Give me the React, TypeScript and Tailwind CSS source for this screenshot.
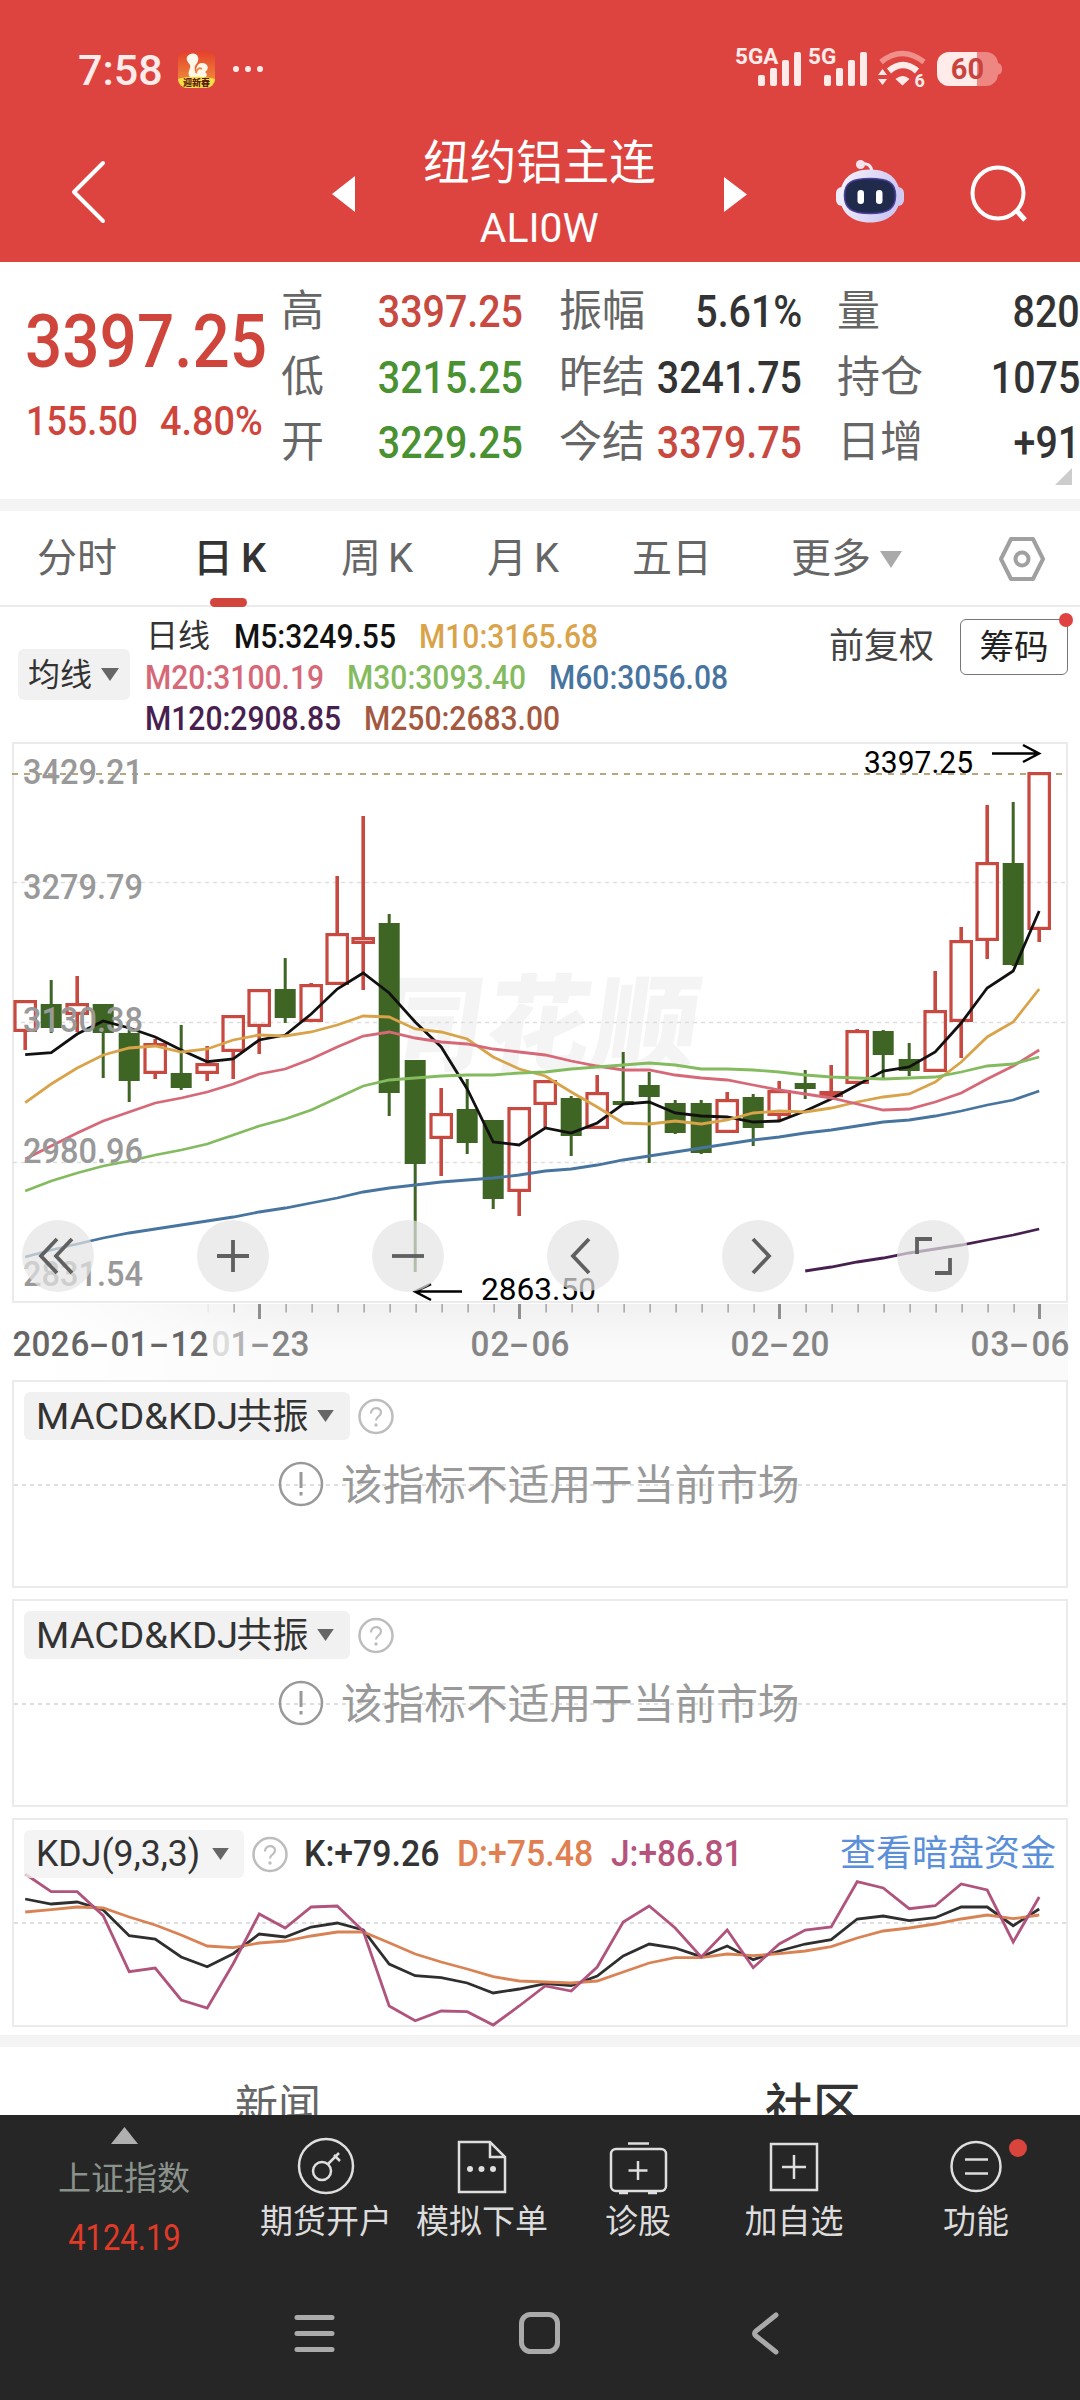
import React from "react";

type Candle = [up: 0 | 1, high: number, top: number, bottom: number, low: number];

const CANDLES: Candle[] = [
  [1, 1000, 1000, 1032, 1050], [0, 980, 1004, 1028, 1033], [1, 976, 1003, 1015, 1032], [0, 1004, 1004, 1033, 1078],
  [0, 1030, 1033, 1081, 1102], [1, 1039, 1043, 1074, 1079], [0, 1025, 1073, 1088, 1090], [1, 1046, 1063, 1074, 1081],
  [1, 1015, 1015, 1052, 1079], [1, 989, 989, 1027, 1054], [0, 958, 989, 1018, 1023], [1, 983, 984, 1022, 1022],
  [1, 876, 933, 985, 985], [1, 816, 937, 944, 990], [0, 914, 923, 1093, 1116], [0, 1060, 1060, 1164, 1272],
  [1, 1088, 1113, 1139, 1176], [0, 1079, 1109, 1143, 1154], [0, 1120, 1120, 1199, 1209], [1, 1107, 1107, 1192, 1216],
  [1, 1080, 1080, 1105, 1127], [0, 1096, 1098, 1136, 1156], [1, 1075, 1092, 1129, 1129], [0, 1052, 1101, 1105, 1105],
  [0, 1072, 1085, 1097, 1163], [0, 1100, 1103, 1133, 1134], [0, 1100, 1103, 1153, 1154], [1, 1092, 1099, 1133, 1133],
  [0, 1094, 1097, 1128, 1146], [1, 1081, 1090, 1116, 1120], [0, 1070, 1083, 1089, 1099], [1, 1065, 1091, 1097, 1097],
  [1, 1029, 1030, 1084, 1084], [0, 1030, 1031, 1055, 1078], [0, 1043, 1059, 1071, 1076], [1, 971, 1010, 1072, 1072],
  [1, 927, 940, 1022, 1058], [1, 805, 862, 941, 959], [0, 802, 863, 965, 966], [1, 772, 772, 930, 942],
];

const AVERAGES = [
  { color: "#111111", from: 0, ys: [1054.7, 1052.7, 1034, 1021, 1028, 1037, 1050, 1061.7, 1059, 1040, 1035, 1014, 989, 973, 993, 1022, 1047, 1089, 1142, 1145, 1128, 1133, 1123, 1104, 1102, 1113, 1116, 1117, 1122, 1121, 1111, 1099, 1085, 1071, 1067, 1052, 1023, 988, 971, 911] },
  { color: "#d9a34a", from: 0, ys: [1102.7, 1084, 1068, 1055, 1048, 1046, 1052, 1049, 1040, 1035, 1036, 1032, 1025, 1016, 1017, 1029, 1032, 1039, 1057, 1069, 1076, 1092, 1107, 1123, 1124, 1121, 1124, 1120, 1113, 1111, 1112, 1108, 1102, 1097, 1094, 1082, 1062, 1037, 1022, 989] },
  { color: "#d66878", from: 0, ys: [1159, 1146, 1133, 1121, 1112, 1103, 1098, 1092, 1084, 1074, 1069, 1059, 1047, 1036, 1032, 1038, 1042, 1044, 1049, 1052, 1055, 1061, 1066, 1070, 1070, 1075, 1078, 1080, 1085, 1090, 1094, 1098, 1104, 1110, 1109, 1102, 1093, 1079, 1066, 1050] },
  { color: "#83bb5e", from: 0, ys: [1191, 1181, 1173, 1166, 1161, 1155, 1150, 1144, 1135, 1126, 1119, 1110, 1098, 1086, 1080, 1078, 1076, 1075, 1075, 1073, 1072, 1069, 1067, 1065, 1063, 1065, 1069, 1069, 1070, 1072, 1075, 1077, 1078, 1079, 1078, 1077, 1072, 1066, 1064, 1057] },
  { color: "#47759f", from: 0, ys: [1257, 1250, 1244, 1238, 1233, 1229, 1225, 1221, 1217, 1212, 1208, 1203, 1198, 1192, 1188, 1185, 1182, 1180, 1178, 1175, 1171, 1169, 1165, 1160, 1156, 1152, 1148, 1144, 1140, 1137, 1133, 1130, 1126, 1122, 1120, 1116, 1111, 1105, 1100, 1091] },
  { color: "#482050", from: 30, ys: [1271, 1267, 1262, 1258, 1253, 1249, 1245, 1240, 1235, 1229] },
];

const KDJ = [
  { color: "#2f2f2f", ys: [1899, 1904, 1902, 1910, 1935.7, 1939, 1957, 1966.7, 1953.7, 1934, 1937, 1927, 1923, 1930, 1964, 1975.7, 1977.7, 1983, 1993, 1989, 1983.7, 1985.7, 1976, 1956, 1944, 1948, 1956.7, 1946, 1959.7, 1951, 1944, 1939.7, 1919, 1916, 1920.7, 1917.7, 1907, 1907, 1925.7, 1909] },
  { color: "#d98355", ys: [1912, 1909.7, 1907, 1908, 1917, 1925, 1935, 1946, 1947.7, 1943, 1941, 1936, 1932, 1932, 1942.7, 1954, 1962, 1969, 1976.7, 1981, 1982, 1983, 1981, 1972, 1963, 1957.7, 1957.7, 1954, 1955.7, 1953.7, 1951, 1946.7, 1938, 1931, 1928, 1924, 1919, 1915, 1918.7, 1915] },
  { color: "#b0547d", ys: [1874, 1891.7, 1891.7, 1915.7, 1971.7, 1968, 2000, 2008, 1963.7, 1914, 1928, 1907, 1906, 1931, 2006, 2020.7, 2011, 2011.7, 2025, 2006, 1986, 1991, 1967, 1922, 1906, 1928, 1957, 1930, 1967.7, 1944, 1930, 1927, 1881.7, 1888, 1908.7, 1905.7, 1884, 1890, 1942, 1897] },
];

const RED = "#c8493f";
const GREEN = "#3e6524";
const cx = (i: number) => 25.2 + 26 * i;
const points = (ys: number[], from = 0) => ys.map((y, i) => `${cx(i + from)},${y}`).join(" ");

function Signal({ label, w }: { label: string; w: string }) {
  return (
    <div className={`relative h-[36px] ${w}`}>
      <span className="absolute -top-[5px] left-0 text-[22.500px] leading-[22px] font-bold">{label}</span>
      <svg className="absolute right-0 bottom-0" width="44" height="36" fill="currentColor">
        <rect x="0" y="25" width="7" height="11" rx="2" />
        <rect x="12" y="18" width="7" height="18" rx="2" />
        <rect x="24" y="10" width="7" height="26" rx="2" />
        <rect x="36" y="2" width="7" height="34" rx="2" />
      </svg>
    </div>
  );
}

function StatusBar() {
  return (
    <div className="flex h-[120px] items-start text-[#ffecea]">
      <div className="flex h-[42px] w-[82px] items-center mt-[49px] ml-[78px]">
        <span className="inline-block origin-left text-[43px] leading-none font-medium">7:58</span>
      </div>
      <svg className="mt-[51px] ml-[18px]" width="37" height="37" viewBox="0 0 37 37">
        <defs>
          <linearGradient id="app" x1="0" y1="0" x2="0" y2="1">
            <stop offset="0" stopColor="#e5402c" />
            <stop offset="1" stopColor="#f09a3e" />
          </linearGradient>
          <clipPath id="appClip"><rect width="37" height="37" rx="9" /></clipPath>
        </defs>
        <g clipPath="url(#appClip)">
          <rect width="37" height="37" fill="url(#app)" />
          <path d="M9 6c2-4 9-5 11 0 1 4-1 6-3 9-1 3 0 6 2 8-2-5 0-11 5-11 6 0 8 6 3 9 3 2 2 5-1 6H13c-4-3-2-7-1-10 2-4-5-6-3-11z" fill="#fff7ea" />
          <path d="M18 22c1-4 3-6 6-4" fill="none" stroke="#ee8a45" strokeWidth="2" />
          <path d="M0 28c8-3 28-3 37 0v9H0z" fill="#f8dc45" />
        </g>
        <text x="18.5" y="34.5" textAnchor="middle" fontSize="9" fontWeight="800" fill="#5b1f10">迎新春</text>
      </svg>
      <svg className="mt-[64px] ml-[17px]" width="34" height="10" fill="currentColor">
        <circle cx="4" cy="5" r="3" /><circle cx="16" cy="5" r="3" /><circle cx="28" cy="5" r="3" />
      </svg>
      <div className="mt-[50px] mr-[82px] ml-auto flex">
        <Signal label="5GA" w="w-[67px]" />
        <div className="w-[6px]" />
        <Signal label="5G" w="w-[60px]" />
        <svg className="ml-[10px]" width="51" height="40" viewBox="0 0 51 40" fill="none">
          <path d="M3 12q21-17 43 0" stroke="#f0908b" strokeWidth="5.500" />
          <path d="M11 21q14-12 28 0" stroke="currentColor" strokeWidth="6.500" />
          <path d="M17.500 29q7.500-6 14 0l-7 6.500z" fill="currentColor" />
          <path d="M0 25l4.500-6 4.500 6zM0 29l4.500 6 4.500-6z" fill="currentColor" />
          <text x="36.500" y="37" fontSize="18" fontWeight="700" fill="currentColor">6</text>
        </svg>
        <div className="relative ml-[8px] flex h-[34px] w-[61px] mt-[2px] items-center justify-center overflow-visible rounded-[12px] bg-linear-to-r from-[#ffecea] from-65% to-[#ee8782] to-65%">
          <span className="text-[29px] leading-none font-bold text-[#c9443f]">60</span>
          <span className="absolute top-[11px] -right-[4px] h-[12px] w-[5px] rounded-r-[5px] bg-[#ee8782]" />
        </div>
      </div>
    </div>
  );
}

function Robot() {
  return (
    <svg width="70" height="66" viewBox="835 159 70 66">
      <defs>
        <linearGradient id="shell" x1="0" y1="0" x2="1" y2="0.3">
          <stop offset="0" stopColor="#f8f3fb" />
          <stop offset="1" stopColor="#ccc8f2" />
        </linearGradient>
      </defs>
      <path d="M861 164q10-2 11 8" fill="none" stroke="#f5e9f5" strokeWidth="3" />
      <circle cx="860.500" cy="164.500" r="4.500" fill="#f3e3ee" />
      <rect x="836" y="187" width="14" height="19" rx="6" fill="#ecebfa" />
      <rect x="890" y="187" width="14" height="19" rx="6" fill="#cfcaf2" />
      <path d="M870 169.500c20 0 30 11 30 27s-12 26-30 26-30-10-30-26 10-27 30-27z" fill="url(#shell)" />
      <path d="M870 178.500c18 0 25.500 4 25.500 17s-7 18-25.500 18-25.500-5-25.500-18 7.500-17 25.500-17z" fill="#202a4a" stroke="#4a3f9c" strokeWidth="1.600" />
      <rect x="857.500" y="190" width="6.500" height="14" rx="3.200" fill="#fff" />
      <rect x="876" y="190" width="6.500" height="14" rx="3.200" fill="#fff" />
    </svg>
  );
}

function TitleBar() {
  return (
    <div className="flex h-[142px] text-white">
      <svg className="mt-[38px] ml-[67px]" width="42" height="68" fill="none" stroke="currentColor" strokeWidth="4">
        <path d="M36 5L7 34l29 29" strokeLinecap="round" strokeLinejoin="round" />
      </svg>
      <svg className="mt-[56px] ml-[222px]" width="25" height="36" fill="currentColor"><path d="M24 0v36L1 18z" /></svg>
      <div className="ml-[45px] flex w-[277px] flex-col items-center pt-[17px]">
        <div className="text-[46.500px] leading-[52px] whitespace-nowrap">纽约铝主连</div>
        <div className="mt-[18px] h-[44px] text-[40px] leading-[44px]"><span className="inline-block scale-x-[1.020]">ALI0W</span></div>
      </div>
      <svg className="mt-[57px] ml-[46px]" width="25" height="35" fill="currentColor"><path d="M0 0v35l23-17.500z" /></svg>
      <div className="mt-[39px] ml-[86px]"><Robot /></div>
      <svg className="mt-[43px] ml-[64px]" width="62" height="62" fill="none" stroke="currentColor" strokeWidth="4">
        <circle cx="29" cy="30" r="25.500" />
        <path d="M47 47l9 10" strokeWidth="5" />
      </svg>
    </div>
  );
}

const QUOTES = [
  [["高", "3397.25", "text-[#c8493f]"], ["振幅", "5.61%", "text-[#333]"], ["量", "820", "text-[#333]"]],
  [["低", "3215.25", "text-[#4a9132]"], ["昨结", "3241.75", "text-[#333]"], ["持仓", "1075", "text-[#333]"]],
  [["开", "3229.25", "text-[#4a9132]"], ["今结", "3379.75", "text-[#c8493f]"], ["日增", "+91", "text-[#333]"]],
];
const QUOTE_CELLS = ["w-[242px] mr-[36px]", "w-[243px] mr-[35px]", "w-[243px]"];

function QuotePanel() {
  return (
    <section className="relative flex h-[237px] bg-white">
      <div className="w-[281px] pt-[41px] pl-[25px] text-[#cf453c]">
        <div className="h-[76px] origin-left scale-x-[.875] text-[75px] leading-[76px] font-medium">3397.25</div>
        <div className="mt-[20px] flex h-[44px] pl-px text-[41.500px] leading-[44px]">
          <span className="w-[134px]"><span className="inline-block origin-left scale-x-[.865] font-medium">155.50</span></span>
          <span><span className="inline-block origin-left scale-x-[.91] font-medium">4.80%</span></span>
        </div>
      </div>
      <div className="flex flex-1 flex-col pt-[17px]">
        {QUOTES.map((row, r) => (
          <div key={r} className="flex h-[65.500px] items-center">
            {row.map(([label, value, color], c) => (
              <div key={label} className={`flex shrink-0 items-center justify-between whitespace-nowrap ${QUOTE_CELLS[c]}`}>
                <span className="text-[43px] leading-none text-[#666]">{label}</span>
                <span className={`-ml-10 origin-right scale-x-[.875] text-[45px] leading-none font-medium ${color}`}>{value}</span>
              </div>
            ))}
          </div>
        ))}
      </div>
      <svg className="absolute right-[8px] bottom-[14px]" width="17" height="17" fill="#ccc"><path d="M17 0v17H0z" /></svg>
    </section>
  );
}

function Tabs() {
  return (
    <nav className="relative flex h-[96px] items-center border-b-2 border-[#ececec] bg-white pt-px text-[40px] leading-none whitespace-nowrap text-[#666]">
      <span className="ml-[37px] w-[156px]">分时</span>
      <span className="relative flex w-[148px] gap-[8px] font-medium text-[#333]">日<span>K</span>
        <i className="absolute top-[59px] left-[17px] h-[9px] w-[37px] rounded-full bg-[#d3443c]" />
      </span>
      <span className="flex w-[146px] gap-[7px]">周<span>K</span></span>
      <span className="flex w-[145px] gap-[7px]">月<span>K</span></span>
      <span className="w-[159px]">五日</span>
      <span className="flex items-center gap-[8px]">更多<svg width="24" height="18" fill="#aaa"><path d="M1 1h22L12 18z" /></svg></span>
      <svg className="mr-[34px] ml-auto" width="48" height="46" fill="none" stroke="#a0a0a0" strokeWidth="4" strokeLinejoin="round">
        <path d="M13 3h22l10 20-10 20H13L3 23z" />
        <circle cx="24" cy="23" r="6.500" />
      </svg>
    </nav>
  );
}

function Caret({ w = 18, h = 13 }: { w?: number; h?: number }) {
  return <svg width={w} height={h} viewBox="0 0 18 13" fill="#666"><path d="M0 0h18L9 13z" /></svg>;
}

function Avg({ w, c, children }: { w: string; c: string; children: string }) {
  return <span className={`${w} ${c}`}><span className="inline-block origin-left scale-x-[.883] font-medium">{children}</span></span>;
}

function AverageLegend() {
  return (
    <section className="flex h-[135px] bg-white text-[34px] whitespace-nowrap">
      <div className="mt-[42px] ml-[18px] flex h-[51px] w-[112px] items-center gap-[9px] rounded-[6px] bg-[#f1f1f1] pl-[10px] text-[32px] leading-none text-[#333]">均线<Caret /></div>
      <div className="ml-[15px] flex w-[684px] flex-col pt-[9px] leading-[41px]">
        <div className="flex h-[41px]">
          <span className="w-[89px] pl-px text-[32px] text-[#333]">日线</span>
          <Avg w="w-[185px]" c="text-[#111]">M5:3249.55</Avg>
          <Avg w="w-[180px]" c="text-[#d9a34a]">M10:3165.68</Avg>
        </div>
        <div className="flex h-[41px]">
          <Avg w="w-[202px]" c="text-[#d66878]">M20:3100.19</Avg>
          <Avg w="w-[202px]" c="text-[#83bb5e]">M30:3093.40</Avg>
          <Avg w="w-[180px]" c="text-[#47759f]">M60:3056.08</Avg>
        </div>
        <div className="flex h-[41px]">
          <Avg w="w-[219px]" c="text-[#482050]">M120:2908.85</Avg>
          <Avg w="w-[200px]" c="text-[#a3593f]">M250:2683.00</Avg>
        </div>
      </div>
      <div className="mt-[22px] w-[131px] text-[35px] leading-[35px] text-[#444]">前复权</div>
      <div className="relative mt-[12px] flex h-[56px] w-[108px] items-center justify-center rounded-[6px] border-[1.500px] border-[#777] text-[34.500px] leading-none text-[#222]">
        筹码<i className="absolute -top-[7px] -right-[6px] size-[14px] rounded-full bg-[#e04242]" />
      </div>
    </section>
  );
}

const SCALE_LABELS: [string, number][] = [["3429.21", 784], ["3279.79", 899], ["3130.38", 1031.5], ["2980.96", 1163], ["2831.54", 1286]];

const CONTROLS = [
  "M35 19L19 36l16 17M50 19L34 36l16 17",
  "M36 20v32M20 36h32",
  "M20 36h32",
  "M42 19L26 36l16 17",
  "M31 19l16 17-16 17",
  "M20 34V19h15M53 38v15H38",
];

function PriceChart() {
  return (
    <section className="relative h-[563px] bg-white">
      <svg className="block" width="1080" height="563" viewBox="0 741 1080 563">
        <text transform="translate(374 1062) skewX(-8)" fontSize="104" fontWeight="900" fill="#f4f4f4" textLength="320">同花顺</text>
        <rect x="13" y="743" width="1054" height="559" fill="none" stroke="#ebebeb" strokeWidth="2" />
        <g stroke="#dedede" strokeWidth="1.300" strokeDasharray="4 4">
          <path d="M13 882.500H1067M13 1022.500H1067M13 1162.500H1067" />
        </g>
        <path d="M12 774H1067" stroke="#b9a67e" strokeWidth="2" strokeDasharray="6 6" />
        {CANDLES.map(([up, high, top, bottom, low], i) =>
          up ? (
            <g key={i} stroke={RED} strokeWidth="3.200" fill="none">
              <path d={`M${cx(i)} ${high}V${top}M${cx(i)} ${bottom}V${low}`} strokeWidth="3.600" />
              <rect x={cx(i) - 10.200} y={top + 1.600} width="20.400" height={bottom - top - 3.200} />
            </g>
          ) : (
            <g key={i} fill={GREEN}>
              <rect x={cx(i) - 1.500} y={high} width="3" height={low - high} />
              <rect x={cx(i) - 10.500} y={top} width="21" height={bottom - top} />
            </g>
          ),
        )}
        {AVERAGES.map((line) => (
          <polyline key={line.color} points={points(line.ys, line.from)} fill="none" stroke={line.color} strokeWidth="2.800" />
        ))}
        <g fontSize="35.500" fontWeight="500" fill="#999">
          {SCALE_LABELS.map(([label, y]) => <text key={label} x="23" y={y} textLength="120" lengthAdjust="spacingAndGlyphs">{label}</text>)}
        </g>
        <g fontSize="32" fill="#000">
          <text x="864" y="773" textLength="109" lengthAdjust="spacingAndGlyphs">3397.25</text>
          <text x="481" y="1299.500" textLength="115" lengthAdjust="spacingAndGlyphs">2863.50</text>
        </g>
        <g fill="none" stroke="#000" strokeWidth="2.500">
          <path d="M992 753.500h47M1023 745l16 8.500-16 8.500M462 1291.500h-47M431 1284l-16 7.500 16 8.500" />
        </g>
      </svg>
      <div className="absolute inset-x-[22px] top-[479px] flex gap-[103px]">
        {CONTROLS.map((d) => (
          <button key={d} className="size-[72px] shrink-0 rounded-full bg-[#e4e4e4]/70">
            <svg width="72" height="72" fill="none" stroke="#606060" strokeWidth="3.800"><path d={d} /></svg>
          </button>
        ))}
      </div>
    </section>
  );
}

function DateLabel({ text, w, fade = [] }: { text: string; w: string; fade?: string[] }) {
  return (
    <span className={`flex justify-between ${w}`}>
      {text.split("").map((ch, i) => (
        <span key={i} className={`text-center ${fade[i] ?? ""} ${ch === "-" ? "w-[20px] scale-x-[1.700]" : "w-[18px] scale-x-[.95]"}`}>{ch}</span>
      ))}
    </span>
  );
}

function DateAxis() {
  const ticks = Array.from({ length: 33 }, (_, k) => k + 7);
  return (
    <section className="relative h-[76px] bg-linear-to-b from-[#f1f1f1] to-[#fafafa] to-60%">
      <div className="absolute inset-y-0 left-0 w-[300px] bg-linear-to-r from-white from-10% to-transparent" />
      <div className="absolute inset-y-0 right-0 w-[12px] bg-white" />
      <svg className="relative block" width="1080" height="16">
        {ticks.map((i) => (
          <rect key={i} x={cx(i) - (i % 10 === 9 ? 1.500 : 0) + 0.300} y="0" width={i % 10 === 9 ? 3 : 1.200} height={i % 10 === 9 ? 15 : 8.500} fill={i === 7 ? "#e6e6e6" : "#8f8f8f"} />
        ))}
      </svg>
      <div className="relative mt-[5px] flex pl-[12px] text-[35px] leading-[40px] font-medium text-[#858585]">
        <div className="text-[#666]"><DateLabel text="2026-01-12" w="w-[195px]" /></div>
        <div className="ml-[4px]"><DateLabel text="01-23" w="w-[97px]" fade={["text-[#dcdcdc]", "text-[#b4b4b4]", "text-[#959595]"]} /></div>
        <div className="ml-[162px]"><DateLabel text="02-06" w="w-[98px]" /></div>
        <div className="ml-[162px]"><DateLabel text="02-20" w="w-[98px]" /></div>
        <div className="ml-[142px]"><DateLabel text="03-06" w="w-[98px]" /></div>
      </div>
    </section>
  );
}

function HelpIcon() {
  return (
    <svg width="36" height="37" viewBox="0 0 36 37" fill="none" stroke="#bdbdbd" strokeWidth="2.500">
      <circle cx="18" cy="18.500" r="16.500" />
      <path d="M13 15.500c0-7 10-7 10-1 0 4-5 4-5 8" strokeWidth="2.200" />
      <circle cx="18" cy="27" r="1.700" fill="#bdbdbd" stroke="none" />
    </svg>
  );
}

function UnavailablePanel() {
  return (
    <section className="relative mx-[12px] mb-[11px] h-[208px] border-2 border-[#ebebeb] bg-white">
      <div className="absolute inset-x-0 top-[102px] h-[1.500px] bg-[repeating-linear-gradient(90deg,#dedede_0_4px,transparent_4px_8px)]" />
      <div className="relative flex pt-[10px] pl-[10px]">
        <div className="flex h-[48px] w-[326px] items-center rounded-[6px] bg-[#f1f1f1] pl-[12px] text-[#333]">
          <span className="flex w-[271px] items-center pt-[2px] text-[36px] leading-none whitespace-nowrap">
            <span className="mr-[10px] origin-left scale-x-[1.060]">MACD&amp;KDJ</span>共振
          </span>
          <span className="ml-[10px]"><Caret w={17} h={12} /></span>
        </div>
        <div className="mt-[6px] ml-[8px]"><HelpIcon /></div>
      </div>
      <div className="relative mt-[23px] flex items-center gap-[17px] pl-[264px] text-[41.700px] leading-[46px] whitespace-nowrap text-[#999]">
        <svg className="-mt-[4px]" width="46" height="46" fill="none" stroke="#999" strokeWidth="2.500">
          <circle cx="23" cy="23" r="21" />
          <path d="M23 11v16M23 31v3.500" strokeWidth="3" />
        </svg>
        <span>该指标不适用于当前市场</span>
      </div>
    </section>
  );
}

function KdjPanel() {
  return (
    <section className="relative mx-[12px] h-[209px] border-2 border-[#ebebeb] bg-white">
      <div className="absolute inset-x-0 top-[102px] h-[1.500px] bg-[repeating-linear-gradient(90deg,#dedede_0_4px,transparent_4px_8px)]" />
      <svg className="absolute -top-[2px] -left-[14px]" width="1080" height="210" viewBox="0 1818 1080 210">
        {KDJ.map((line) => <polyline key={line.color} points={points(line.ys)} fill="none" stroke={line.color} strokeWidth="2.800" />)}
      </svg>
      <div className="relative flex pt-[10px] pl-[10px] text-[36px] leading-[49px] whitespace-nowrap text-[#333]">
        <div className="flex h-[48px] w-[220px] items-center rounded-[6px] bg-[#f1f1f1]/80 pl-[12px]">
          <span className="w-[164px]"><span className="inline-block origin-left scale-x-[.99]">KDJ(9,3,3)</span></span>
          <span className="ml-[12px]"><Caret w={17} h={12} /></span>
        </div>
        <div className="mt-[6px] ml-[8px]"><HelpIcon /></div>
        <span className="ml-[16px] w-[153px]"><span className="inline-block origin-left scale-x-[.94] font-medium">K:+79.26</span></span>
        <span className="w-[154px] text-[#df7f52]"><span className="inline-block origin-left scale-x-[.94] font-medium">D:+75.48</span></span>
        <span className="w-[229px] text-[#b5537c]"><span className="inline-block origin-left scale-x-[.93] font-medium">J:+86.81</span></span>
        <span className="text-[#5b8fd9]">查看暗盘资金</span>
      </div>
    </section>
  );
}

function Item({ icon, label, w }: { icon: React.ReactNode; label: string; w: string }) {
  return (
    <div className={`flex shrink-0 flex-col items-center ${w}`}>
      <svg className="mt-[20px]" width="64" height="64" fill="none" stroke="#dedede" strokeWidth="2.500">{icon}</svg>
      <span className="mt-[6px] text-[33px] leading-[34px] whitespace-nowrap text-[#dcdcdc]">{label}</span>
    </div>
  );
}

function BottomBar() {
  return (
    <footer className="h-[285px] bg-[#262626]">
      <div className="relative flex h-[160px]">
        <div className="flex w-[248px] flex-col pt-[12px]">
          <div className="flex w-full flex-col items-center">
            <svg width="27" height="17" fill="#b0b0b0"><path d="M13.500 0L27 17H0z" /></svg>
            <span className="mt-[17px] text-[33px] leading-[36px] text-[#8a928c]">上证指数</span>
            <span className="mt-[23px] inline-block scale-x-[.86] text-[36px] leading-[36px] text-[#e03a28]">4124.19</span>
          </div>
        </div>
        <Item w="w-[156px]" label="期货开户" icon={<><circle cx="32" cy="31" r="27" /><circle cx="28" cy="36" r="9" /><path d="M34 29l11-11M40 20l6 6" /></>} />
        <Item w="w-[156px]" label="模拟下单" icon={<><path d="M9 7h31l15 15v35H9z" /><path d="M40 7v15h15" /><g fill="#dedede" stroke="none"><circle cx="20" cy="34" r="3" /><circle cx="31.500" cy="34" r="3" /><circle cx="43" cy="34" r="3" /></g></>} />
        <Item w="w-[156px]" label="诊股" icon={<><rect x="5" y="14" width="55" height="42" rx="5" /><path d="M22 8.500h21M32 26v19M22.500 35.500h19M13 58h9M42 58h9" /></>} />
        <Item w="w-[156px]" label="加自选" icon={<><rect x="9" y="9" width="46" height="46" /><path d="M32 20v24M20 32h24" /></>} />
        <Item w="w-[208px]" label="功能" icon={<><circle cx="32" cy="31.500" r="24.500" /><path d="M21 24.500h23M21 38.500h23" /></>} />
        <i className="absolute top-[24px] left-[1009px] size-[18px] rounded-full bg-[#d9453c]" />
      </div>
      <div className="flex h-[125px] pl-[290px]">
        <svg className="mt-[34px]" width="50" height="50" stroke="#aaa" strokeWidth="5" strokeLinecap="round"><path d="M7 8.500h35M7 24.500h35M7 40.500h35" /></svg>
        <svg className="mt-[34px] ml-[175px]" width="50" height="50" fill="none" stroke="#aaa" strokeWidth="5"><rect x="6.500" y="5.500" width="36" height="37" rx="9" /></svg>
        <svg className="mt-[34px] ml-[180px]" width="50" height="50" fill="none" stroke="#aaa" strokeWidth="5" strokeLinecap="round" strokeLinejoin="round"><path d="M31 6L11 22q-3 2.500 0 5l20 16" /></svg>
      </div>
    </footer>
  );
}

export default function App() {
  return (
    <div className="h-[2400px] w-[1080px] overflow-hidden bg-white font-['Roboto','Noto_Sans_CJK_SC',sans-serif]">
      <header className="bg-[#dd4440]">
        <StatusBar />
        <TitleBar />
      </header>
      <QuotePanel />
      <div className="h-[12px] bg-[#f4f4f4]" />
      <Tabs />
      <AverageLegend />
      <div className="-mt-px"><PriceChart /></div>
      <DateAxis />
      <UnavailablePanel />
      <UnavailablePanel />
      <KdjPanel />
      <div className="mt-[8px] h-[12px] bg-[#f4f4f4]" />
      <div className="flex h-[68px] overflow-hidden bg-white text-center whitespace-nowrap">
        <span className="w-[556px] pt-[35px] text-[43px] leading-[48px] text-[#666]">新闻</span>
        <span className="w-[514px] pt-[34px] text-[48px] leading-[52px] font-medium text-[#333]">社区</span>
      </div>
      <BottomBar />
    </div>
  );
}
